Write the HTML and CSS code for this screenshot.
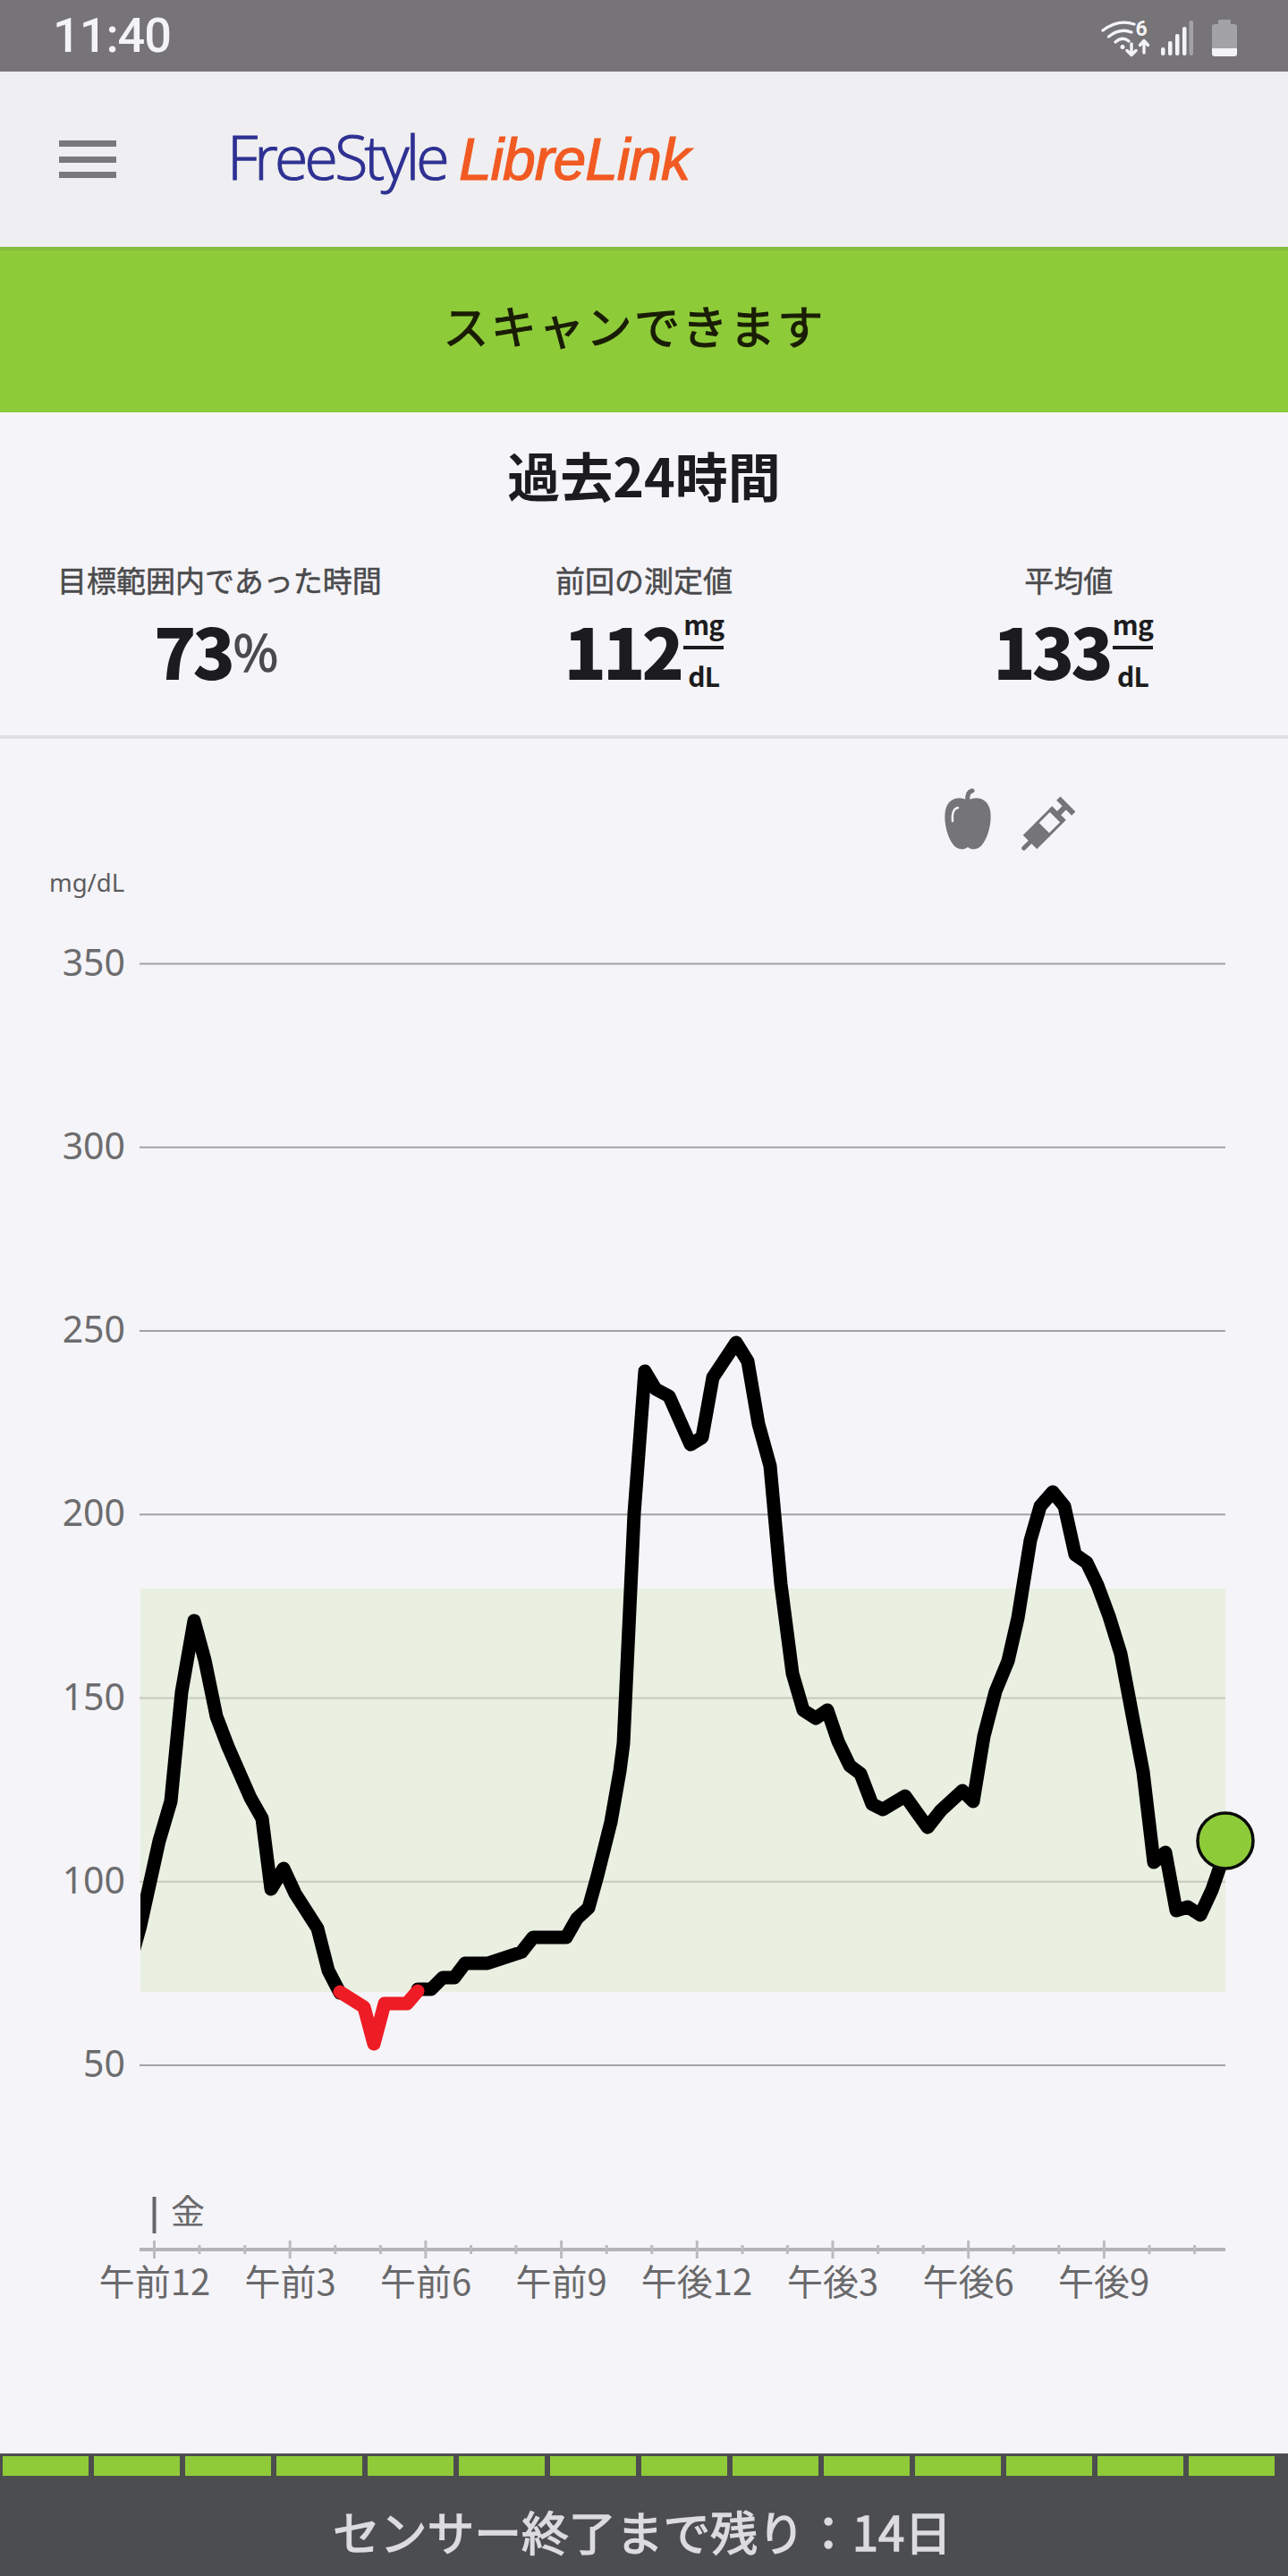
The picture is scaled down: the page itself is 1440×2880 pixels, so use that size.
FILE: index.html
```html
<!DOCTYPE html>
<html lang="ja">
<head>
    <meta charset="UTF-8">
    <meta name="viewport" content="width=device-width, initial-scale=1.0">
    <title>FreeStyle LibreLink</title>
    <link rel="stylesheet" href="styles.css">
</head>
<body>
    <div class="status-bar">
        <span class="clock">11:40</span>
        <svg class="status-icons" viewBox="1225 0 165 80" width="165" height="80">
            <g class="wifi">
                <path d="M1233 34Q1250 21 1268 27"/>
                <path d="M1239.5 41Q1252 31 1265 36"/>
                <path d="M1247 47Q1255 40 1262 46"/>
                <path d="M1265 49V61M1260 56.5L1265 61.5L1270 56.5"/>
                <path d="M1279 59V46M1274.5 50.5L1279 45.5L1283.5 50.5"/>
            </g>
            <circle class="icon-fill" cx="1255" cy="52.5" r="2.5"/>
            <text class="wifi-six" x="1276" y="40" text-anchor="middle">6</text>
            <rect class="icon-fill" x="1298" y="53" width="4.5" height="9" rx="2"/>
            <rect class="icon-fill" x="1306" y="46" width="4.5" height="16" rx="2"/>
            <rect class="icon-fill" x="1314" y="38" width="4.5" height="24" rx="2"/>
            <rect class="icon-fill" x="1322" y="30" width="4.5" height="32" rx="2"/>
            <rect class="icon-dim" x="1329.5" y="23" width="4.5" height="39" rx="2"/>
            <path class="icon-dim" d="M1363 22H1375Q1376 22 1376 23V27H1380Q1383 27 1383 30V54H1355V30Q1355 27 1358 27H1362V23Q1362 22 1363 22Z"/>
            <path class="icon-fill" d="M1355 54H1383V60Q1383 63 1380 63H1358Q1355 63 1355 60Z"/>
        </svg>
    </div>

    <header class="app-header">
        <div class="menu-btn"><span></span><span></span><span></span></div>
        <div class="logo"><span class="logo-free">FreeStyle</span><span class="logo-libre">LibreLink</span></div>
    </header>

    <div class="scan-banner">スキャンできます</div>

    <section class="summary">
        <h1>過去24時間</h1>
        <div class="stats">
            <div class="stat stat-range">
                <div class="stat-label">目標範囲内であった時間</div>
                <div class="stat-value">73<span class="percent">%</span></div>
            </div>
            <div class="stat">
                <div class="stat-label">前回の測定値</div>
                <div class="stat-value">112<span class="unit"><span class="unit-top">mg</span><span class="unit-bottom">dL</span></span></div>
            </div>
            <div class="stat stat-average">
                <div class="stat-label">平均値</div>
                <div class="stat-value">133<span class="unit"><span class="unit-top">mg</span><span class="unit-bottom">dL</span></span></div>
            </div>
        </div>
    </section>

    <main class="chart">
        <svg viewBox="0 826 1440 1917" width="1440" height="1917">
            <defs>
                <clipPath id="plotClip"><rect x="157" y="1000" width="1283" height="1500"/></clipPath>
            </defs>

            <!-- meal and insulin markers -->
            <path class="marker" d="M1082 895C1074 890 1060 891 1057 906C1054 922 1062 944 1070 948C1074 950 1079 950 1082 947C1085 950 1090 950 1094 948C1102 944 1110 922 1107 906C1104 891 1090 890 1082 895Z"/>
            <path class="marker-line" d="M1082 896C1081 889 1083 885 1087 884"/>
            <path class="marker-shine" d="M1065 918C1064 910 1066 904 1071 903"/>
            <g transform="translate(1143 950) rotate(-45)">
                <rect class="marker" x="0" y="-2.5" width="14" height="5" rx="2"/>
                <rect class="marker" x="12" y="-11" width="21" height="22"/>
                <rect class="marker-barrel" x="33" y="-9.5" width="20" height="19"/>
                <rect class="marker" x="53" y="-3" width="14" height="6"/>
                <rect class="marker" x="53" y="-11" width="5" height="22"/>
                <rect class="marker" x="66" y="-12" width="6" height="24"/>
            </g>

            <text class="axis-unit" x="55" y="997">mg/dL</text>

            <!-- target range -->
            <rect class="range" x="157" y="1776" width="1213" height="451"/>

            <line class="grid" x1="156" x2="1370" y1="1077.5" y2="1077.5"/>
            <line class="grid" x1="156" x2="1370" y1="1282.7" y2="1282.7"/>
            <line class="grid" x1="156" x2="1370" y1="1488" y2="1488"/>
            <line class="grid" x1="156" x2="1370" y1="1693.2" y2="1693.2"/>
            <line class="grid grid-in" x1="156" x2="1370" y1="1898.6" y2="1898.6"/>
            <line class="grid grid-in" x1="156" x2="1370" y1="2103.8" y2="2103.8"/>
            <line class="grid" x1="156" x2="1370" y1="2309" y2="2309"/>

            <text class="axis-y" x="140" y="1091">350</text>
            <text class="axis-y" x="140" y="1296">300</text>
            <text class="axis-y" x="140" y="1501">250</text>
            <text class="axis-y" x="140" y="1706">200</text>
            <text class="axis-y" x="140" y="1912">150</text>
            <text class="axis-y" x="140" y="2117">100</text>
            <text class="axis-y" x="140" y="2322">50</text>

            <!-- glucose curve -->
            <g clip-path="url(#plotClip)">
                <polyline class="curve" points="145,2196 157,2153 178,2058 191,2014 203,1892 217,1812 229,1856 242,1919 255,1953 280,2010 293,2033 303,2112 317,2089 330,2117 355,2156 367,2203 380,2228"/>
                <polyline class="curve" points="467,2224 482,2224 495,2211 508,2211 520,2195 545,2195 583,2182.5 596,2166 633,2166 645,2145 658,2133 668,2097 683,2037 693,1980 697,1949 709,1692 721,1533 733,1553 748,1561 772,1615 785,1607 797,1540 823,1501 836,1522 848,1592 861,1639 873,1771 886,1871 898,1912 912,1921 925,1912 937,1947 950,1974 962,1983 975,2017 987,2023 1012,2008 1037,2043 1052,2024 1076,2002 1088,2014 1100,1941 1113,1891 1127,1857 1138,1809 1152,1722 1163,1684 1177,1668 1190,1684 1202,1738 1215,1747 1227,1772 1240,1807 1253,1849 1267,1923 1278,1981 1290,2082 1303,2071 1315,2136 1328,2132 1342,2141 1355,2113 1365,2084 1370,2058"/>
                <polyline class="curve curve-low" points="380,2227 407,2244 418,2285 430,2240 455,2240 467,2226"/>
            </g>
            <circle class="current" cx="1370" cy="2058" r="31"/>

            <!-- time axis -->
            <line class="day-mark" x1="172.5" x2="172.5" y1="2456" y2="2497"/>
            <text class="day-label" x="191" y="2486">金</text>

            <line class="axis" x1="156" x2="1370" y1="2515" y2="2515"/>
            <path class="tick" d="M172.5 2505V2525M324.2 2505V2525M475.9 2505V2525M627.6 2505V2525M779.3 2505V2525M931 2505V2525M1082.7 2505V2525M1234.4 2505V2525"/>
            <path class="tick" d="M223 2510V2520M273.8 2510V2520M374.8 2510V2520M425.4 2510V2520M526.5 2510V2520M577 2510V2520M678.2 2510V2520M728.8 2510V2520M830 2510V2520M880.4 2510V2520M981.6 2510V2520M1032.2 2510V2520M1133.3 2510V2520M1183.8 2510V2520M1285 2510V2520M1335.6 2510V2520"/>

            <text class="axis-x" x="173" y="2566">午前12</text>
            <text class="axis-x" x="324.5" y="2566">午前3</text>
            <text class="axis-x" x="476" y="2566">午前6</text>
            <text class="axis-x" x="627.5" y="2566">午前9</text>
            <text class="axis-x" x="779" y="2566">午後12</text>
            <text class="axis-x" x="931" y="2566">午後3</text>
            <text class="axis-x" x="1082.5" y="2566">午後6</text>
            <text class="axis-x" x="1234" y="2566">午後9</text>
        </svg>
    </main>

    <footer class="sensor">
        <div class="sensor-days">
            <span></span><span></span><span></span><span></span><span></span><span></span><span></span>
            <span></span><span></span><span></span><span></span><span></span><span></span><span></span>
        </div>
        <div class="sensor-text">センサー終了まで残り：14日</div>
    </footer>
</body>
</html>
```

FILE: styles.css
```css
body {
    margin: 0;
    width: 1440px;
    height: 2880px;
    display: flex;
    flex-direction: column;
    overflow: hidden;
    background: #f5f4f8;
    color: #1c1c1e;
    font-family: "Noto Sans CJK JP", "Noto Sans", sans-serif;
}

/* status bar */
.status-bar {
    height: 80px;
    flex: none;
    background: #767477;
    display: flex;
    justify-content: space-between;
    align-items: center;
    padding-left: 59px;
    padding-right: 50px;
}
.clock {
    font-family: Roboto, sans-serif;
    font-size: 54px;
    font-weight: 500;
    line-height: 80px;
    letter-spacing: -1px;
    color: #f4f3f5;
}
.status-icons {
    display: block;
}
.wifi path {
    fill: none;
    stroke: #f4f3f5;
    stroke-width: 3.4;
    stroke-linecap: round;
    stroke-linejoin: round;
}
.wifi-six {
    fill: #f4f3f5;
    font-family: Roboto, sans-serif;
    font-size: 23px;
    font-weight: 700;
}
.icon-fill {
    fill: #f4f3f5;
}
.icon-dim {
    fill: #a3a2a4;
}

/* app header */
.app-header {
    height: 196px;
    flex: none;
    background: #efeef0;
    display: flex;
    align-items: center;
    padding-left: 66px;
}
.menu-btn {
    width: 64px;
    height: 42px;
    display: flex;
    flex-direction: column;
    justify-content: space-between;
    margin-right: 124px;
}
.menu-btn span {
    height: 7px;
    background: #79797b;
}
.logo {
    display: flex;
    align-items: baseline;
    white-space: nowrap;
    line-height: 80px;
    margin-top: -3px;
}
.logo-free {
    font-family: "Open Sans", sans-serif;
    font-size: 68px;
    font-weight: 300;
    letter-spacing: -3.8px;
    color: #2e3192;
    -webkit-text-stroke: 1.1px #2e3192;
}
.logo-libre {
    font-family: "Liberation Sans", sans-serif;
    font-size: 66px;
    font-style: italic;
    letter-spacing: -1.1px;
    color: #f15a22;
    margin-left: 14px;
    -webkit-text-stroke: 1.2px #f15a22;
}

/* scan banner */
.scan-banner {
    height: 185px;
    flex: none;
    box-sizing: border-box;
    background: #8ecb39;
    border-top: 4px solid #84bd3a;
    padding-right: 22px;
    padding-bottom: 16px;
    display: flex;
    align-items: center;
    justify-content: center;
    font-size: 51px;
    font-weight: 400;
    letter-spacing: 2.4px;
    color: #1a1d05;
    -webkit-text-stroke: 1.2px #1a1d05;
}

/* summary */
.summary {
    height: 365px;
    flex: none;
    box-sizing: border-box;
    border-bottom: 4px solid #e0dfe2;
    padding: 40px 8px 0;
}
.summary h1 {
    margin: 0;
    font-size: 59px;
    font-weight: 700;
    line-height: 60px;
    text-align: center;
    color: #1c1c1e;
}
.stats {
    display: grid;
    grid-template-columns: repeat(3, 1fr);
    margin-top: 67px;
}
.stat {
    text-align: center;
}
.stat-label {
    font-size: 33px;
    font-weight: 400;
    line-height: 40px;
    color: #4a4a4c;
    -webkit-text-stroke: 0.5px #4a4a4c;
}
.stat-value {
    display: flex;
    justify-content: center;
    align-items: center;
    height: 96px;
    margin-top: 10px;
    font-size: 78px;
    font-weight: 900;
    letter-spacing: -4px;
    color: #1c1c1e;
}
.stat-range .stat-value {
    padding-right: 8px;
}
.stat-average .stat-value {
    padding-left: 10px;
}
.percent {
    margin-left: 2px;
    font-size: 54px;
    font-weight: 400;
    letter-spacing: 0;
    color: #4a4a4c;
    -webkit-text-stroke: 1.4px #4a4a4c;
}
.unit {
    display: flex;
    flex-direction: column;
    align-items: center;
    margin-left: 3px;
    font-size: 30px;
    font-weight: 700;
    letter-spacing: -0.8px;
    line-height: 30px;
}
.unit-top {
    border-bottom: 4px solid #1c1c1e;
    padding-bottom: 10px;
}
.unit-bottom {
    padding-top: 14px;
}

/* chart */
.chart {
    flex: 1;
    min-height: 0;
}
.chart svg {
    display: block;
}
.marker {
    fill: #757476;
}
.marker-line {
    fill: none;
    stroke: #757476;
    stroke-width: 5;
    stroke-linecap: round;
}
.marker-shine {
    fill: none;
    stroke: #f5f4f8;
    stroke-width: 2.5;
    stroke-linecap: round;
}
.marker-barrel {
    fill: #f5f4f8;
    stroke: #757476;
    stroke-width: 3;
}
.axis-unit {
    font-family: "Noto Sans", sans-serif;
    font-size: 27.5px;
    fill: #5c5c5e;
}
.range {
    fill: #e9efe1;
}
.grid {
    stroke: #a2a2a4;
    stroke-width: 2;
}
.grid-in {
    stroke: #c5c8bd;
}
.axis-y {
    font-family: "Noto Sans", sans-serif;
    font-size: 41px;
    fill: #6c6c6e;
    text-anchor: end;
}
.curve {
    fill: none;
    stroke: #000;
    stroke-width: 15;
    stroke-linecap: round;
    stroke-linejoin: round;
}
.curve-low {
    stroke: #ee1c25;
}
.current {
    fill: #8ecb39;
    stroke: #0a0a0a;
    stroke-width: 3.5;
}
.day-mark {
    stroke: #666668;
    stroke-width: 4;
}
.day-label {
    font-size: 38px;
    fill: #6a6a6c;
}
.axis {
    stroke: #b4b3b6;
    stroke-width: 4;
}
.tick {
    fill: none;
    stroke: #bcbbbe;
    stroke-width: 3;
}
.axis-x {
    font-size: 40px;
    fill: #69696b;
    text-anchor: middle;
}

/* sensor footer */
.sensor {
    height: 137px;
    flex: none;
    box-sizing: border-box;
    background: #4c4d4f;
    padding-top: 3px;
}
.sensor-days {
    display: flex;
    gap: 6px;
    padding-left: 3px;
}
.sensor-days span {
    width: 96px;
    height: 22px;
    background: #8fcb38;
}
.sensor-text {
    margin-top: 16px;
    padding-right: 4px;
    font-size: 52.8px;
    font-weight: 400;
    line-height: 90px;
    text-align: center;
    color: #dcdcde;
    -webkit-text-stroke: 1.4px #dcdcde;
}
```
